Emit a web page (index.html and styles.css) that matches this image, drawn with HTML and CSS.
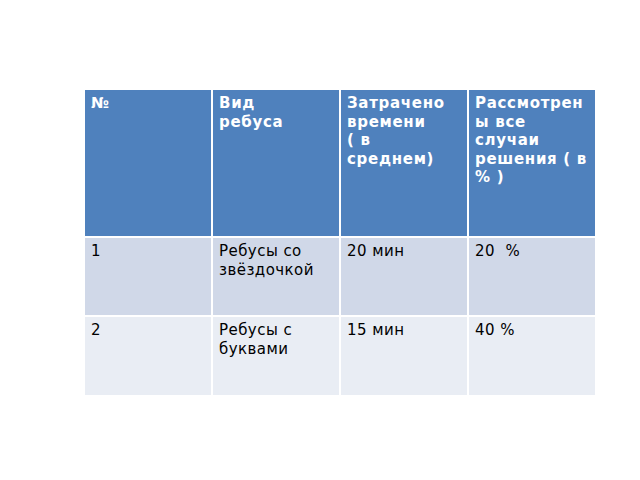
FILE: index.html
```html
<!DOCTYPE html>
<html lang="ru">
<head>
<meta charset="utf-8">
<link rel="stylesheet" href="styles.css">
</head>
<body>
<div class="page">
  <div class="grid">
    <div class="cell head">№</div>
    <div class="cell head">Вид<br>ребуса</div>
    <div class="cell head">Затрачено<br>времени<br>( в<br>среднем)</div>
    <div class="cell head">Рассмотрен<br>ы все<br>случаи<br>решения ( в<br>% )</div>

    <div class="cell odd">1</div>
    <div class="cell odd">Ребусы со<br>звёздочкой</div>
    <div class="cell odd">20 мин</div>
    <div class="cell odd">20 &nbsp;%</div>

    <div class="cell even">2</div>
    <div class="cell even">Ребусы с<br>буквами</div>
    <div class="cell even">15 мин</div>
    <div class="cell even">40 %</div>
  </div>
</div>
</body>
</html>
```

FILE: styles.css
```css
html, body {
  margin: 0;
  padding: 0;
  background: #ffffff;
}
.page {
  width: 640px;
  height: 480px;
  padding: 90px 0 0 85px;
  box-sizing: border-box;
}
.grid {
  display: grid;
  grid-template-columns: 126px 126px 126px 126px;
  grid-template-rows: 146px 77px 78px;
  gap: 2px;
  width: 510px;
  background: #ffffff;
  font-family: "DejaVu Sans", sans-serif;
  font-size: 15px;
  line-height: 18.5px;
}
.cell {
  padding: 4px 4px 0 6px;
  overflow: hidden;
  white-space: nowrap;
}
.head {
  background: #4f81bd;
  color: #ffffff;
  font-weight: bold;
  letter-spacing: 0.7px;
}
.odd {
  background: #d0d8e8;
  color: #000000;
  letter-spacing: 0.45px;
}
.even {
  background: #e9edf4;
  color: #000000;
  letter-spacing: 0.45px;
}
```
